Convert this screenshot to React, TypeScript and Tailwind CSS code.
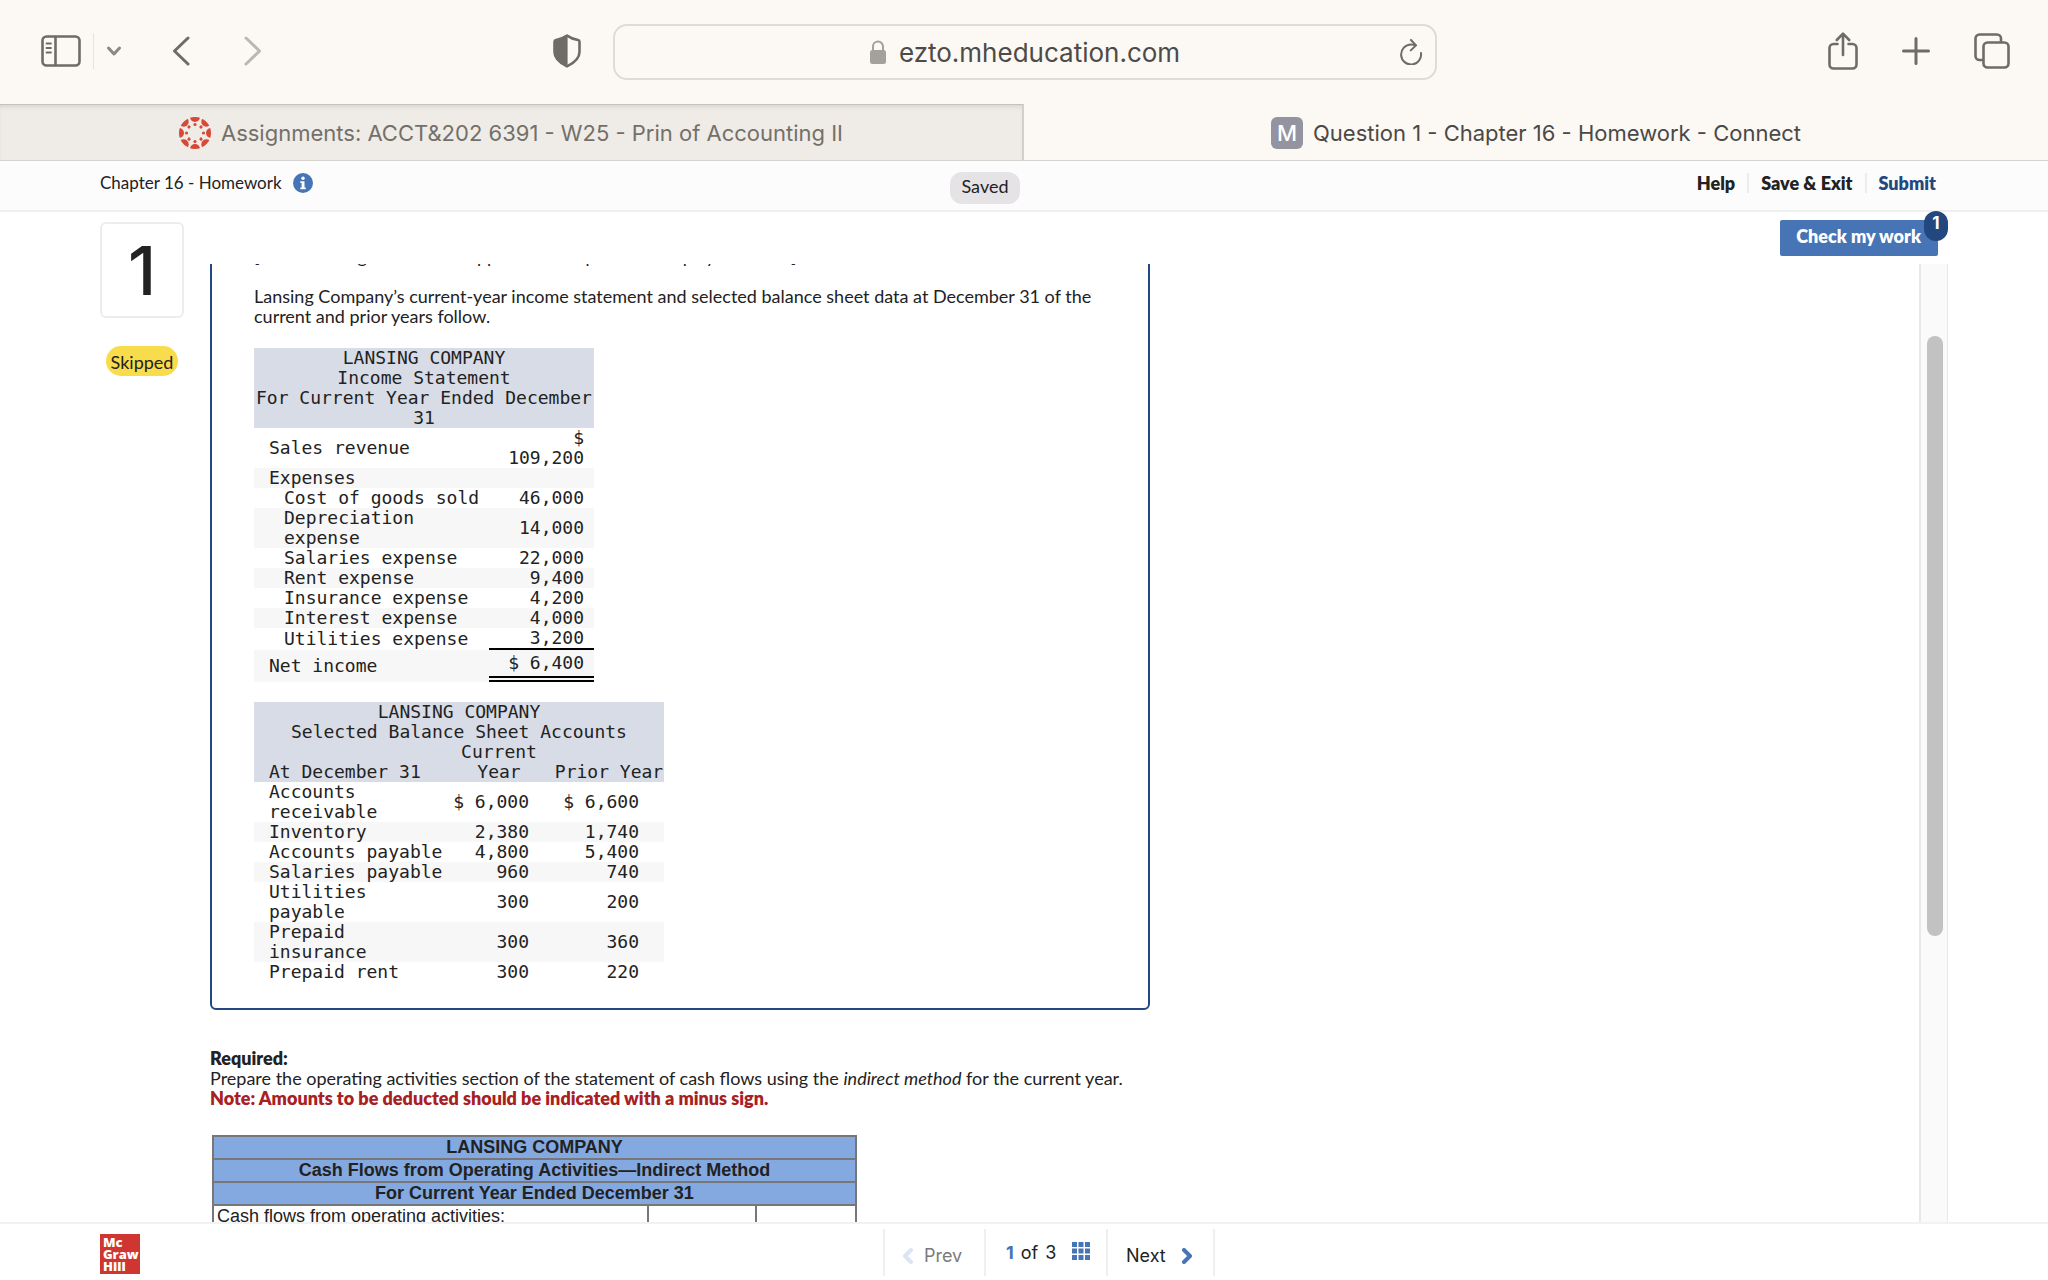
import React from "react";

const PROXIMA = "font-['Lato','Open_Sans',sans-serif]";
const MONO = "font-['DejaVu_Sans_Mono',monospace]";

type IconProps = { className?: string };

function SidebarIcon({ className }: IconProps) {
  return (
    <svg className={className} viewBox="0 0 40 32" fill="none" stroke="currentColor" strokeWidth="2.6" strokeLinecap="round">
      <rect x="1.5" y="1.5" width="37" height="29" rx="4" />
      <path d="M14.5 2v28" />
      <path d="M5.5 8.5h4.5M5.5 13h4.5M5.5 17.5h4.5" strokeWidth="1.8" />
    </svg>
  );
}

function Chevron({ className, d, box, width = 3 }: IconProps & { d: string; box: string; width?: number }) {
  return (
    <svg className={className} viewBox={box} fill="none" stroke="currentColor" strokeWidth={width} strokeLinecap="round" strokeLinejoin="round">
      <path d={d} />
    </svg>
  );
}

function ShieldIcon({ className }: IconProps) {
  return (
    <svg className={className} viewBox="0 0 28 34">
      <path
        d="M14 1.6C17.5 4 21.500 5.400 25 6c1 .2 1.500 .9 1.500 1.800V18c0 6.500-4.500 10.500-12.500 14.400C6 28.500 1.500 24.500 1.500 18V7.800C1.500 6.900 2 6.200 3 6c3.500-.6 7.500-2 11-4.400Z"
        fill="none"
        stroke="currentColor"
        strokeWidth="2.6"
        strokeLinejoin="round"
      />
      <path d="M14.600 1.200C10.500 4 6.500 5.400 3 6c-1 .2-1.500 .9-1.500 1.800V18c0 6.500 4.500 10.500 13.100 14.700Z" fill="currentColor" />
    </svg>
  );
}

function LockIcon({ className }: IconProps) {
  return (
    <svg className={className} viewBox="0 0 16 24">
      <rect x="0" y="10" width="16" height="14" rx="2.500" fill="currentColor" />
      <path d="M3 11V6.500a5 5 0 0 1 10 0V11" fill="none" stroke="currentColor" strokeWidth="2" />
    </svg>
  );
}

function ReloadIcon({ className }: IconProps) {
  return (
    <svg className={className} viewBox="0 0 24 26" fill="none" stroke="currentColor" strokeWidth="2" strokeLinecap="round" strokeLinejoin="round">
      <path d="M22 14A10 10 0 1 1 12 5.500c1.800 0 3 .2 4.500 .8" />
      <path d="M12 1l5 5.400-5.200 5" />
    </svg>
  );
}

function ShareIcon({ className }: IconProps) {
  return (
    <svg className={className} viewBox="0 0 30 38" fill="none" stroke="currentColor" strokeWidth="2.600" strokeLinecap="round" strokeLinejoin="round">
      <path d="M9.500 12H5.500a4 4 0 0 0-4 4v16.500a4 4 0 0 0 4 4h19a4 4 0 0 0 4-4V16a4 4 0 0 0-4-4h-4" />
      <path d="M15 23V2M8.800 8L15 1.700 21.200 8" />
    </svg>
  );
}

function PlusIcon({ className }: IconProps) {
  return (
    <svg className={className} viewBox="0 0 28 28" fill="none" stroke="currentColor" strokeWidth="3" strokeLinecap="round">
      <path d="M14 1.500v25M1.500 14h25" />
    </svg>
  );
}

function TabsIcon({ className }: IconProps) {
  return (
    <svg className={className} viewBox="0 0 36 36" fill="none" stroke="currentColor" strokeWidth="2.600" strokeLinejoin="round">
      <rect x="9.500" y="9.500" width="25" height="25" rx="4" />
      <path d="M9 27H5.500a4 4 0 0 1-4-4V5.500a4 4 0 0 1 4-4H23a4 4 0 0 1 4 4V9" />
    </svg>
  );
}

const ANGLES = [0, 45, 90, 135, 180, 225, 270, 315];

function CanvasLogo({ className }: IconProps) {
  return (
    <svg className={className} viewBox="0 0 32 32" fill="#d64937">
      <clipPath id="canvas-disc">
        <circle cx="16" cy="16" r="16" />
      </clipPath>
      {ANGLES.map((a) => (
        <g key={a} transform={`rotate(${a} 16 16)`}>
          <circle cx="16" cy="0" r="5" clipPath="url(#canvas-disc)" />
          <circle cx="16" cy="7.500" r="1.600" />
        </g>
      ))}
    </svg>
  );
}

function InfoIcon({ className }: IconProps) {
  return (
    <svg className={className} viewBox="0 0 20 20">
      <circle cx="10" cy="10" r="10" fill="#4774b5" />
      <circle cx="10" cy="5.200" r="1.700" fill="#fff" />
      <path d="M7.300 8.200h4.200v6.200h1.300v1.800H7.300v-1.800h1.300V10H7.300Z" fill="#fff" />
    </svg>
  );
}

function GridIcon({ className }: IconProps) {
  return (
    <svg className={className} viewBox="0 0 18 18" fill="#4774b5">
      {[0, 6.5, 13].map((y) => [0, 6.5, 13].map((x) => <rect key={`${x}-${y}`} x={x} y={y} width="5" height="5" />))}
    </svg>
  );
}

function BrowserToolbar() {
  return (
    <header className="flex h-[104px] shrink-0 items-center bg-[#fcf8f3] pr-[38px] pb-[2px] pl-10 text-[#6f6c66]">
      <div className="flex flex-1 items-center">
        <button aria-label="Show sidebar" className="ml-px">
          <SidebarIcon className="h-8 w-10" />
        </button>
        <span className="ml-3 h-9 w-px bg-[#e6e3de]" />
        <button aria-label="Tab groups" className="ml-3 text-[#8a8883]">
          <Chevron className="h-3 w-4" box="0 0 16 12" d="M2.500 3L8 9l5.500-6" />
        </button>
        <button aria-label="Back" className="ml-[50px]">
          <Chevron className="h-[30px] w-[18px]" box="0 0 18 30" d="M16 2L2.500 15 16 28" />
        </button>
        <button aria-label="Forward" className="ml-[54px] text-[#bbb8b2]">
          <Chevron className="h-[30px] w-[18px]" box="0 0 18 30" d="M2 2l13.500 13L2 28" />
        </button>
        <button aria-label="Privacy report" className="mr-8 ml-auto">
          <ShieldIcon className="h-[34px] w-7" />
        </button>
      </div>
      <div className="mt-[2px] flex h-14 w-[824px] items-center rounded-[14px] border-2 border-[#dfdcd7] pr-3">
        <div className="flex flex-1 items-center justify-center gap-[13px] pl-9 font-['Inter',sans-serif] text-[26px] text-[#4c4b49]">
          <LockIcon className="h-6 w-4 text-[#a3a19e]" />
          ezto.mheducation.com
        </div>
        <button aria-label="Reload">
          <ReloadIcon className="h-[26px] w-6" />
        </button>
      </div>
      <div className="flex flex-1 items-center justify-end">
        <button aria-label="Share">
          <ShareIcon className="h-[38px] w-[30px]" />
        </button>
        <button aria-label="New tab" className="ml-11">
          <PlusIcon className="h-7 w-7" />
        </button>
        <button aria-label="Tab overview" className="ml-11">
          <TabsIcon className="h-9 w-9" />
        </button>
      </div>
    </header>
  );
}

function TabStrip() {
  return (
    <nav className="grid h-[57px] shrink-0 grid-cols-2 border-b border-[#d6d5d2] bg-[#fcf8f3] font-['Inter',sans-serif] text-[22px]">
      <button className="flex items-center justify-center gap-[10px] border-t border-r-2 border-t-[#c6c3bd] border-r-[#d3d0cb] bg-[#efebe6] pt-px text-[#73706a] shadow-[inset_0_4px_4px_-2px_#d8d5cf]">
        <CanvasLogo className="h-8 w-8" />
        Assignments: ACCT&amp;202 6391 - W25 - Prin of Accounting II
      </button>
      <button className="flex items-center justify-center gap-[10px] pt-[2px] text-[#4b4945]">
        <span className="flex h-8 w-8 items-center justify-center rounded-md bg-[#9494a0] font-medium text-white">M</span>
        Question 1 - Chapter 16 - Homework - Connect
      </button>
    </nav>
  );
}

function AssignmentBar() {
  return (
    <div className="grid h-[51px] shrink-0 grid-cols-[1fr_auto_1fr] items-start border-b-2 border-[#efefef] bg-[#fcfcfd] pr-[112px] pl-[100px] text-[18px] leading-5">
      <div className="flex items-center gap-[11px] pt-3 text-[17px]">
        Chapter 16 - Homework
        <button aria-label="Assignment info">
          <InfoIcon className="h-5 w-5" />
        </button>
      </div>
      <span className="mt-[11px] mr-[66px] h-8 rounded-[12px] bg-[#e5e3e6] px-[11px] pt-1">Saved</span>
      <div className="flex items-center justify-end gap-3 pt-3 font-extrabold">
        <a href="#help">Help</a>
        <span className="h-5 w-0.5 bg-[#ececec]" />
        <a href="#exit">Save &amp; Exit</a>
        <span className="h-5 w-0.5 bg-[#ececec]" />
        <a href="#submit" className="text-[#23477f]">
          Submit
        </a>
      </div>
    </div>
  );
}

const expenses = [
  ["Cost of goods sold", "46,000"],
  ["Depreciation expense", "14,000"],
  ["Salaries expense", "22,000"],
  ["Rent expense", "9,400"],
  ["Insurance expense", "4,200"],
  ["Interest expense", "4,000"],
];

function IncomeStatement() {
  return (
    <table className={`w-[340px] table-fixed border-collapse text-[18px] leading-5 ${MONO}`}>
      <colgroup>
        <col />
        <col className="w-[105px]" />
      </colgroup>
      <thead className="bg-[#d8dce6]">
        <tr>
          <th colSpan={2} className="p-0 text-center font-normal">
            LANSING COMPANY
            <br />
            Income Statement
            <br />
            For Current Year Ended December 31
          </th>
        </tr>
      </thead>
      <tbody className="[&>tr:nth-child(even)]:bg-[#f7f7f7]">
        <tr>
          <td className="p-0 pl-[15px]">Sales revenue</td>
          <td className="p-0 pr-[10px] text-right">$ 109,200</td>
        </tr>
        <tr>
          <td className="p-0 pl-[15px]">Expenses</td>
          <td className="p-0" />
        </tr>
        {expenses.map(([label, value]) => (
          <tr key={label}>
            <td className="p-0 pl-[30px]">{label}</td>
            <td className="p-0 pr-[10px] text-right">{value}</td>
          </tr>
        ))}
        <tr>
          <td className="p-0 pl-[30px]">Utilities expense</td>
          <td className="p-0 text-right">
            <div className="border-b-2 border-black pr-[10px]">3,200</div>
          </td>
        </tr>
        <tr>
          <td className="p-0 pl-[15px]">Net income</td>
          <td className="p-0 text-right">
            <div className="border-b-6 border-double border-black pt-[3px] pr-[10px] pb-[3px]">$ 6,400</div>
          </td>
        </tr>
      </tbody>
    </table>
  );
}

const balances = [
  ["Accounts receivable", "$ 6,000", "$ 6,600"],
  ["Inventory", "2,380", "1,740"],
  ["Accounts payable", "4,800", "5,400"],
  ["Salaries payable", "960", "740"],
  ["Utilities payable", "300", "200"],
  ["Prepaid insurance", "300", "360"],
  ["Prepaid rent", "300", "220"],
];

function BalanceSheet() {
  return (
    <table className={`mt-5 w-[410px] table-fixed border-collapse text-[18px] leading-5 ${MONO}`}>
      <colgroup>
        <col />
        <col className="w-[110px]" />
        <col className="w-[110px]" />
      </colgroup>
      <thead className="bg-[#d8dce6]">
        <tr>
          <th colSpan={3} className="p-0 text-center font-normal">
            LANSING COMPANY
            <br />
            Selected Balance Sheet Accounts
          </th>
        </tr>
        <tr className="align-bottom">
          <th className="p-0 pl-[15px] text-left font-normal">At December 31</th>
          <th className="p-0 text-center font-normal">Current Year</th>
          <th className="p-0 text-center font-normal">Prior Year</th>
        </tr>
      </thead>
      <tbody className="[&>tr:nth-child(even)]:bg-[#f7f7f7]">
        {balances.map(([label, current, prior]) => (
          <tr key={label}>
            <td className="p-0 pl-[15px]">{label}</td>
            <td className="p-0 pr-[25px] text-right">{current}</td>
            <td className="p-0 pr-[25px] text-right">{prior}</td>
          </tr>
        ))}
      </tbody>
    </table>
  );
}

function CashFlowTable() {
  const cell = "border-2 border-[#777] p-0";
  return (
    <table className="mt-[27px] ml-0.5 w-[645px] table-fixed border-collapse font-['Liberation_Sans',Arial,sans-serif] text-[18px] leading-[21px]">
      <colgroup>
        <col />
        <col className="w-[108px]" />
        <col className="w-[100px]" />
      </colgroup>
      <thead className="bg-[#84a9e0]">
        {["LANSING COMPANY", "Cash Flows from Operating Activities—Indirect Method", "For Current Year Ended December 31"].map((t) => (
          <tr key={t}>
            <th colSpan={3} className={`${cell} text-center font-bold`}>
              {t}
            </th>
          </tr>
        ))}
      </thead>
      <tbody>
        <tr>
          <td className={`${cell} pl-[3px]`}>Cash flows from operating activities:</td>
          <td className={cell} />
          <td className={cell} />
        </tr>
      </tbody>
    </table>
  );
}

function QuestionPane() {
  return (
    <div className="flex min-h-0 flex-1 overflow-hidden">
      <div className="flex-1 text-[18px] leading-5">
        <section className="-mt-[38px] w-[940px] rounded-md border-2 border-[#23477f] px-[42px] pt-[18px] pb-[26px]">
          <p>[The following information applies to the questions displayed below.]</p>
          <p className="mt-5 mb-[22px]">
            Lansing Company’s current-year income statement and selected balance sheet data at December 31 of the current and prior years
            follow.
          </p>
          <IncomeStatement />
          <BalanceSheet />
        </section>
        <div className="mt-[38px]">
          <p className="font-extrabold">Required:</p>
          <p>
            Prepare the operating activities section of the statement of cash flows using the <em>indirect method</em> for the current year.
          </p>
          <p className="font-extrabold text-[#a8201f]">Note: Amounts to be deducted should be indicated with a minus sign.</p>
        </div>
        <CashFlowTable />
      </div>
      <div className="w-[29px] border-r border-l-2 border-[#e8e8e8] bg-[#fafafa] pt-[72px] pl-[6px]">
        <div className="h-[600px] w-4 rounded-full bg-[#c2c2c2]" />
      </div>
    </div>
  );
}

function FooterBar() {
  return (
    <footer className="grid h-[58px] shrink-0 grid-cols-[1fr_auto_1fr] border-t-2 border-[#f2f2f2] bg-white px-[100px]">
      <div className="mt-[10px] h-10 w-10 bg-[#cf3631] pt-0.5 pl-[3px] font-['Open_Sans',sans-serif] text-[13px] leading-3 font-extrabold text-white">
        Mc
        <br />
        Graw
        <br />
        Hill
      </div>
      <div className="mt-[5px] ml-[50px] flex h-[47px] divide-x-2 divide-[#efefef] border-x-2 border-[#efefef] font-['Inter',sans-serif] text-[18px]">
        <button className="flex w-[101px] items-center gap-[11px] pt-[6px] pl-[18px] text-[#7a7a7a]">
          <Chevron className="h-4 w-[10px] text-[#dbe4f2]" width={4} box="0 0 10 16" d="M8 2L2 8l6 6" />
          Prev
        </button>
        <div className="flex w-[122px] items-center pl-5">
          <span className="font-bold text-[#4774b5]">1</span>
          <span className="ml-[7px]">of</span>
          <span className="ml-[7px]">3</span>
          <button aria-label="Question list" className="ml-4 pb-1">
            <GridIcon className="h-[18px] w-[18px]" />
          </button>
        </div>
        <button className="flex w-[105px] items-center gap-4 pt-[6px] pl-[18px]">
          Next
          <Chevron className="h-4 w-[10px] text-[#4774b5]" width={4} box="0 0 10 16" d="M2 2l6 6-6 6" />
        </button>
      </div>
    </footer>
  );
}

export default function App() {
  return (
    <div className={`flex h-screen flex-col overflow-hidden bg-white text-[#222] ${PROXIMA}`}>
      <BrowserToolbar />
      <TabStrip />
      <AssignmentBar />
      <main className="flex min-h-0 flex-1 gap-[26px] px-[100px]">
        <aside className="flex w-[84px] shrink-0 flex-col items-center pt-[10px]">
          <div className="flex h-24 w-[84px] items-center justify-center rounded-md border-2 border-[#ededed] font-['Inter',sans-serif] text-[68px] font-medium">
            1
          </div>
          <span className="mt-7 h-[30px] rounded-full bg-[#f8dc4c] px-[5px] pt-1 text-[18px] leading-6">Skipped</span>
        </aside>
        <div className="flex min-w-0 flex-1 flex-col">
          <div className="flex h-[52px] shrink-0 items-start justify-end pt-2">
            <button className="relative mr-[10px] h-9 rounded-xs bg-[#4774b5] pr-[17px] pb-1 pl-4 text-[18px] font-extrabold text-white">
              Check my work
              <span className="absolute -top-[9px] -right-[10px] flex h-[30px] w-6 items-start justify-center rounded-full bg-[#23477f] font-['Inter',sans-serif] text-[17px] font-bold">
                1
              </span>
            </button>
          </div>
          <QuestionPane />
        </div>
      </main>
      <FooterBar />
    </div>
  );
}
